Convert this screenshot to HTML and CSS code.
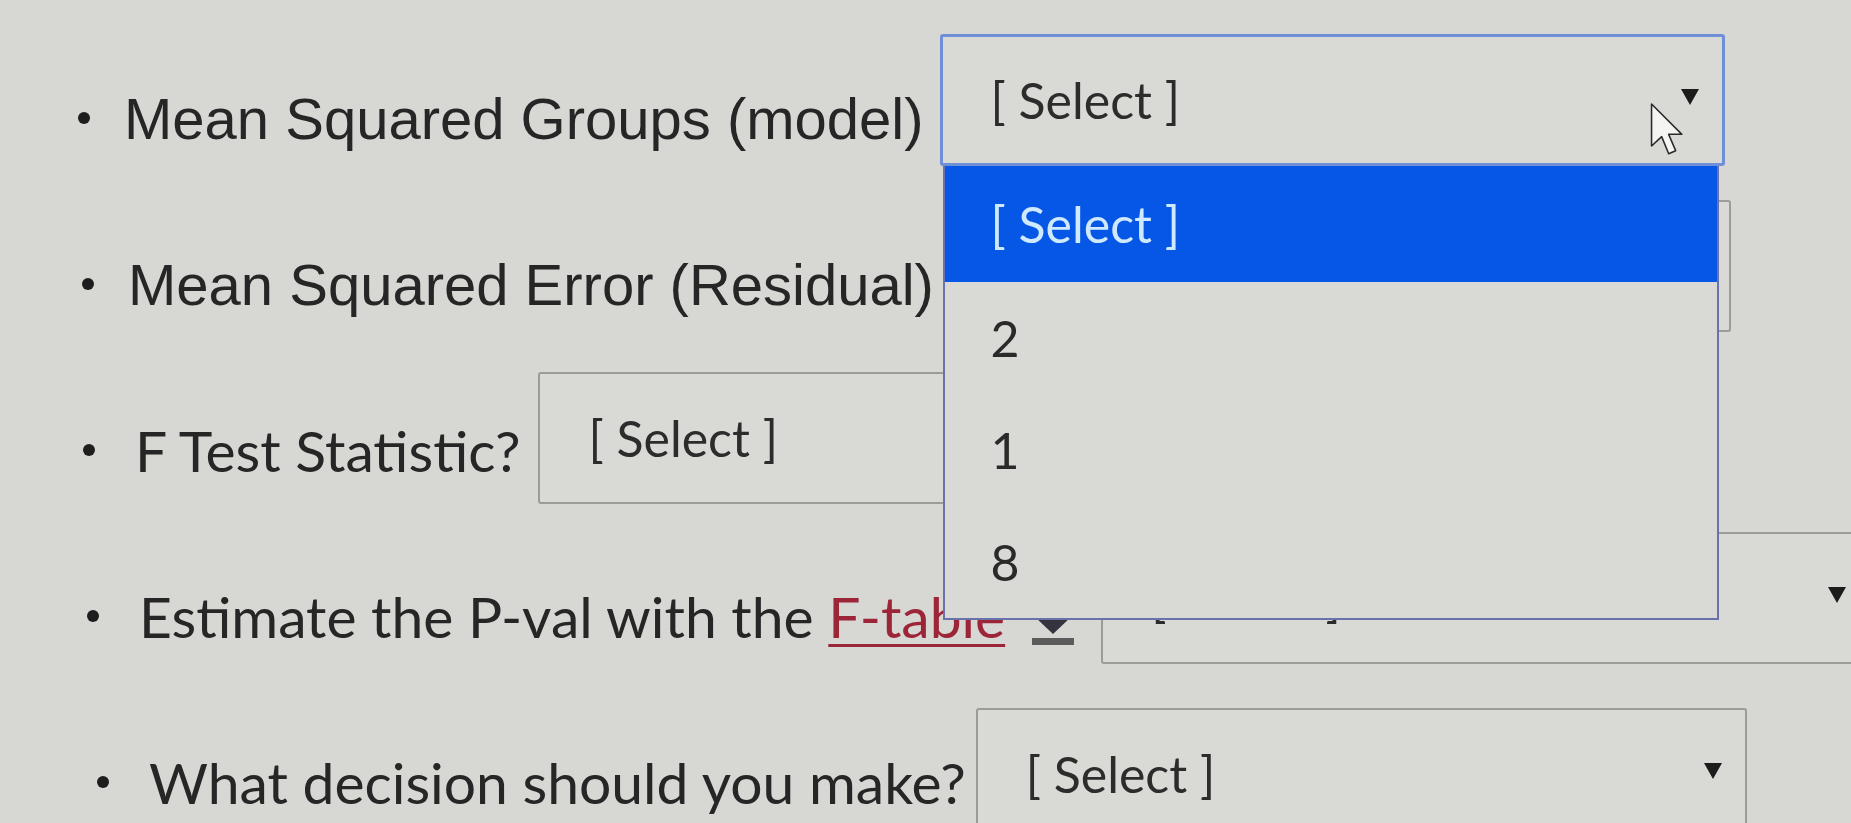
FILE: index.html
```html
<!DOCTYPE html>
<html lang="en">
<head>
<meta charset="utf-8">
    <title>One-way ANOVA quiz</title>

    <link rel="stylesheet" href="styles.css">
</head>
<body>
    <ul class="quiz">
        <li class="question row1 arial">
            <span class="prompt">Mean Squared Groups (model)</span>
            <div class="picker">
                <div class="select focused"><span class="value">[ Select ]</span><span class="caret"></span></div>
                <ul class="options">
                    <li class="option active">[ Select ]</li>
                    <li class="option">2</li>
                    <li class="option">1</li>
                    <li class="option">8</li>
                </ul>
                <svg class="pointer" width="42" height="60" viewBox="0 0 27 38">
                    <path d="M1 1 L1 28 L7.5 22 L12 33 L16.5 31 L12 20.5 L20.5 20.5 Z" fill="#f4f4f2" stroke="#2a2a2a" stroke-width="1" stroke-linejoin="round"/>
                </svg>
            </div>
        </li>
        <li class="question row2 arial">
            <span class="prompt">Mean Squared Error (Residual)</span>
            <div class="picker">
                <div class="select"><span class="value">[ Select ]</span><span class="caret"></span></div>
            </div>
        </li>
        <li class="question row3">
            <span class="prompt">F Test Statistic?</span>
            <div class="picker">
                <div class="select"><span class="value">[ Select ]</span><span class="caret"></span></div>
            </div>
        </li>
        <li class="question row4">
            <span class="prompt">Estimate the P-val with the <a href="#" class="file-link">F-table</a></span>
            <svg class="download" width="44" height="30" viewBox="0 0 44 30">
                <path d="M4 0 L40 0 L22 17 Z" fill="#34343e"/>
                <rect x="1" y="21" width="42" height="7" fill="#5c5c5c"/>
            </svg>
            <div class="picker">
                <div class="select"><span class="value">[ Select ]</span><span class="caret"></span></div>
            </div>
        </li>
        <li class="question row5">
            <span class="prompt">What decision should you make?</span>
            <div class="picker">
                <div class="select"><span class="value">[ Select ]</span><span class="caret"></span></div>
            </div>
        </li>
    </ul>
</body>
</html>
```

FILE: styles.css
```css
        html, body {
            margin: 0;
            height: 100%;
            overflow: hidden;
            background: #d7d7d4;
        }
        body {
            font-family: Lato, "Open Sans", sans-serif;
            color: #262626;
        }
        .quiz {
            list-style: none;
            margin: 0;
            padding: 35px 0 0 0;
        }
        .question {
            display: flex;
            align-items: center;
            height: 166px;
        }
        .question::before {
            content: "";
            flex: none;
            width: 12px;
            height: 12px;
            border-radius: 50%;
            background: #1e1e1e;
            margin-right: 40px;
        }
        .prompt {
            font-size: 57px;
            white-space: nowrap;
        }
        .arial .prompt {
            font-family: "Liberation Sans", Arial, sans-serif;
            font-size: 58px;
        }
        .arial::before {
            margin-right: 34px;
        }
        .row1 { padding-left: 78px; }
        .row2 { padding-left: 82px; }
        .row3 { padding-left: 83px; }
        .row4 { padding-left: 87px; }
        .row5 { padding-left: 97px; }

        .file-link {
            color: #9c2638;
            text-decoration: underline;
            text-decoration-thickness: 3px;
            text-underline-offset: 6px;
        }
        .download {
            flex: none;
            margin: 32px 0 0 26px;
        }

        .picker {
            position: relative;
            flex: none;
            margin-left: 16px;
            margin-top: -36px;
        }
        .row3 .picker { margin-top: -24px; margin-left: 18px; }
        .row4 .picker { margin-left: 26px; }
        .row5 .picker { margin-top: -16px; margin-left: 10px; }

        .select {
            box-sizing: border-box;
            width: 785px;
            height: 132px;
            display: flex;
            align-items: center;
            justify-content: space-between;
            padding: 0 23px 0 48px;
            border: 2px solid #9b9b98;
            border-radius: 3px;
            background: #d9d9d6;
            font-size: 50px;
            color: #2c2c2c;
        }
        .row2 .select { width: 781px; }
        .row4 .select { width: 770px; }
        .row5 .select { width: 771px; }
        .select.focused {
            border: 3px solid #6f8fd6;
        }
        .caret {
            width: 0;
            height: 0;
            border-left: 9px solid transparent;
            border-right: 9px solid transparent;
            border-top: 16px solid #1c1c1c;
            margin-top: -6px;
        }

        .options {
            position: absolute;
            top: 100%;
            left: 3px;
            z-index: 5;
            box-sizing: border-box;
            width: 776px;
            margin: 0;
            padding: 0;
            list-style: none;
            background: #d9d9d6;
            border: 2px solid #6a72ab;
            border-top: none;
        }
        .option {
            display: flex;
            align-items: center;
            height: 112px;
            padding-left: 46px;
            font-size: 50px;
            color: #2a2a2a;
        }
        .option.active {
            height: 116px;
            background: #0657e6;
            color: #cfeaff;
        }
        .pointer {
            position: absolute;
            left: 710px;
            top: 68px;
            z-index: 6;
        }
```
